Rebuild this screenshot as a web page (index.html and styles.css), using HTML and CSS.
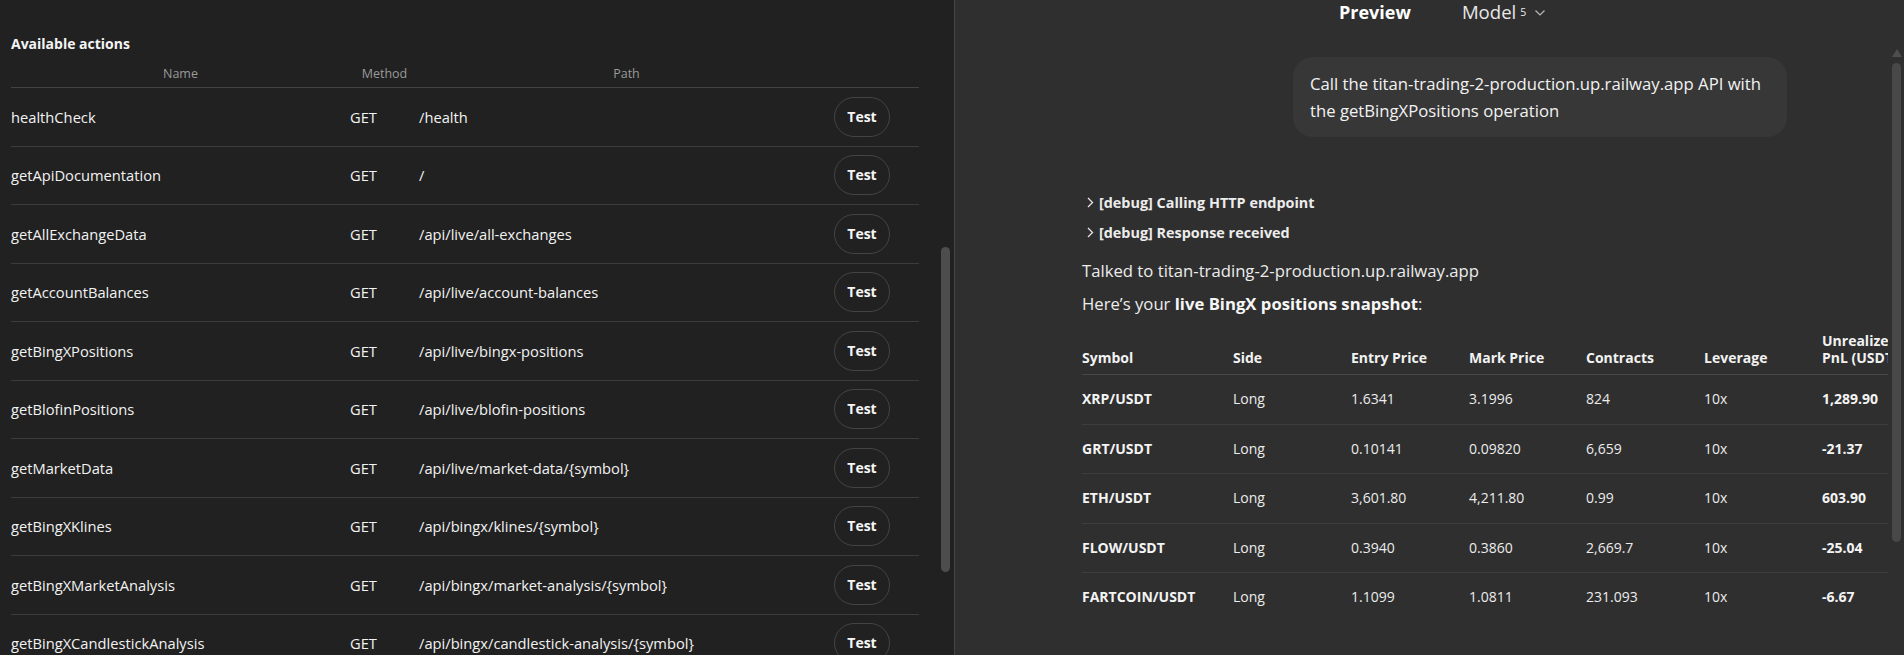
FILE: index.html
```html
<!DOCTYPE html>
<html lang="en">
<head>
<meta charset="utf-8">
<title>Actions and Preview</title>
<link rel="stylesheet" href="styles.css">
</head>
<body>
<div class="app">
  <section class="left">
    <div class="left-main">
      <h2 class="section-title">Available actions</h2>
      <table class="actions">
        <colgroup><col class="c-name"><col class="c-method"><col class="c-path"><col class="c-act"></colgroup>
        <thead>
          <tr><th>Name</th><th>Method</th><th>Path</th><th></th></tr>
        </thead>
        <tbody>
          <tr><td>healthCheck</td><td>GET</td><td>/health</td><td><button class="test-btn">Test</button></td></tr>
          <tr><td>getApiDocumentation</td><td>GET</td><td>/</td><td><button class="test-btn">Test</button></td></tr>
          <tr><td>getAllExchangeData</td><td>GET</td><td>/api/live/all-exchanges</td><td><button class="test-btn">Test</button></td></tr>
          <tr><td>getAccountBalances</td><td>GET</td><td>/api/live/account-balances</td><td><button class="test-btn">Test</button></td></tr>
          <tr><td>getBingXPositions</td><td>GET</td><td>/api/live/bingx-positions</td><td><button class="test-btn">Test</button></td></tr>
          <tr><td>getBlofinPositions</td><td>GET</td><td>/api/live/blofin-positions</td><td><button class="test-btn">Test</button></td></tr>
          <tr><td>getMarketData</td><td>GET</td><td>/api/live/market-data/{symbol}</td><td><button class="test-btn">Test</button></td></tr>
          <tr><td>getBingXKlines</td><td>GET</td><td>/api/bingx/klines/{symbol}</td><td><button class="test-btn">Test</button></td></tr>
          <tr><td>getBingXMarketAnalysis</td><td>GET</td><td>/api/bingx/market-analysis/{symbol}</td><td><button class="test-btn">Test</button></td></tr>
          <tr><td>getBingXCandlestickAnalysis</td><td>GET</td><td>/api/bingx/candlestick-analysis/{symbol}</td><td><button class="test-btn">Test</button></td></tr>
        </tbody>
      </table>
    </div>
    <div class="vscroll-left"><div class="thumb-left"></div></div>
  </section>
  <div class="divider"></div>
  <section class="right">
    <header class="tabs">
      <span class="tab-preview">Preview</span>
      <span class="tab-model">Model<span class="model-num">5</span>
        <svg class="model-chev" width="10" height="6" viewBox="0 0 10 6"><path d="M0.5 0.5 L5 5 L9.5 0.5" fill="none" stroke="#bdbdbd" stroke-width="1.1"/></svg>
      </span>
    </header>
    <div class="chat-area">
      <div class="chat-col">
        <div class="user-row">
          <div class="bubble">Call the titan-trading-2-production.up.railway.app API with the getBingXPositions operation</div>
        </div>
        <div class="debug-list">
          <div class="debug-line">
            <svg class="chev" width="7" height="11" viewBox="0 0 7 11"><path d="M1 1 L5.5 5.5 L1 10" fill="none" stroke="#e6e6e6" stroke-width="1.3"/></svg>
            <span>[debug] Calling HTTP endpoint</span>
          </div>
          <div class="debug-line">
            <svg class="chev" width="7" height="11" viewBox="0 0 7 11"><path d="M1 1 L5.5 5.5 L1 10" fill="none" stroke="#e6e6e6" stroke-width="1.3"/></svg>
            <span>[debug] Response received</span>
          </div>
        </div>
        <p class="prose">Talked to titan-trading-2-production.up.railway.app</p>
        <p class="prose">Here’s your <strong>live BingX positions snapshot</strong>:</p>
        <div class="table-wrap">
          <table class="positions">
            <colgroup><col class="p-sym"><col class="p-side"><col class="p-entry"><col class="p-mark"><col class="p-con"><col class="p-lev"><col class="p-pnl"></colgroup>
            <thead>
              <tr><th>Symbol</th><th>Side</th><th>Entry Price</th><th>Mark Price</th><th>Contracts</th><th>Leverage</th><th>Unrealized PnL (USDT)</th></tr>
            </thead>
            <tbody>
              <tr><td class="b">XRP/USDT</td><td>Long</td><td>1.6341</td><td>3.1996</td><td>824</td><td>10x</td><td class="b">1,289.90</td></tr>
              <tr><td class="b">GRT/USDT</td><td>Long</td><td>0.10141</td><td>0.09820</td><td>6,659</td><td>10x</td><td class="b">-21.37</td></tr>
              <tr><td class="b">ETH/USDT</td><td>Long</td><td>3,601.80</td><td>4,211.80</td><td>0.99</td><td>10x</td><td class="b">603.90</td></tr>
              <tr><td class="b">FLOW/USDT</td><td>Long</td><td>0.3940</td><td>0.3860</td><td>2,669.7</td><td>10x</td><td class="b">-25.04</td></tr>
              <tr><td class="b">FARTCOIN/USDT</td><td>Long</td><td>1.1099</td><td>1.0811</td><td>231.093</td><td>10x</td><td class="b">-6.67</td></tr>
            </tbody>
          </table>
        </div>
      </div>
      <div class="vscroll-right">
        <div class="arrow-up"></div>
        <div class="thumb-right"></div>
      </div>
    </div>
  </section>
</div>
</body>
</html>
```
FILE: styles.css
```css
* { box-sizing: border-box; }

html, body {
  margin: 0;
  padding: 0;
  height: 655px;
  overflow: hidden;
  background: #212121;
  font-family: "Open Sans", "Noto Sans", sans-serif;
  color: #ececec;
}

.app {
  display: flex;
  height: 655px;
  width: 1904px;
}

/* ---------- Left panel ---------- */
.left {
  width: 954px;
  flex: none;
  display: flex;
  background: #212121;
  overflow: hidden;
}

.left-main {
  width: 919px;
  padding-left: 11px;
  padding-top: 34px;
  flex: none;
}

.section-title {
  margin: 0;
  font-size: 14px;
  font-weight: 700;
  line-height: 19px;
  color: #f4f4f4;
}

.actions {
  width: 908px;
  table-layout: fixed;
  border-collapse: separate;
  border-spacing: 0;
  margin-top: 8px;
}

.c-name { width: 339px; }
.c-method { width: 69px; }
.c-path { width: 415px; }
.c-act { width: 85px; }

.actions th {
  font-size: 12.5px;
  font-weight: 400;
  color: #9a9a9a;
  text-align: center;
  line-height: 18px;
  padding: 4px 0 4px;
  border-bottom: 1px solid #424242;
}

.actions td {
  font-size: 14.7px;
  line-height: 40px;
  padding: 8.75px 0;
  border-bottom: 1px solid #3c3c3c;
  color: #f2f2f2;
  white-space: nowrap;
  text-align: left;
}

.test-btn {
  display: block;
  width: 56px;
  height: 40px;
  border-radius: 20px;
  border: 1px solid #444444;
  background: transparent;
  color: #f6f6f6;
  font-family: "Open Sans", "Noto Sans", sans-serif;
  font-size: 14px;
  font-weight: 700;
  padding: 0;
  line-height: 38px;
}

.vscroll-left {
  width: 9px;
  margin-left: 22px;
  padding-top: 247px;
  flex: none;
}

.thumb-left {
  width: 9px;
  height: 325px;
  border-radius: 5px;
  background: #4d4d4d;
}

.divider {
  width: 1px;
  flex: none;
  background: #464646;
}

/* ---------- Right panel ---------- */
.right {
  flex: 1;
  background: #2f2f2f;
  display: flex;
  flex-direction: column;
  overflow: hidden;
}

.tabs {
  height: 24px;
  display: flex;
  align-items: center;
  padding-left: 384px;
  gap: 51px;
  flex: none;
}

.tab-preview {
  font-size: 18px;
  font-weight: 700;
  color: #ffffff;
  line-height: 24px;
}

.tab-model {
  font-size: 18.6px;
  font-weight: 400;
  color: #e8e8e8;
  line-height: 24px;
  display: flex;
  align-items: center;
}

.model-num {
  font-size: 10.5px;
  margin-left: 4px;
  line-height: 24px;
}

.model-chev {
  margin-left: 9px;
  margin-top: 1px;
}

.chat-area {
  flex: 1;
  display: flex;
  padding-left: 127px;
}

.chat-col {
  width: 806px;
  flex: none;
  padding-top: 33px;
}

.user-row {
  display: flex;
  justify-content: flex-end;
  padding-right: 101px;
}

.bubble {
  max-width: 494px;
  background: #373737;
  border-radius: 20px;
  padding: 13px 18px 13px 17px;
  font-size: 16.7px;
  line-height: 27px;
  color: #f2f2f2;
}

.debug-list {
  margin-top: 50px;
}

.debug-line {
  display: flex;
  align-items: center;
  height: 30px;
  padding-left: 5px;
  font-size: 14.4px;
  font-weight: 700;
  color: #ececec;
}

.chev {
  margin-right: 5px;
  flex: none;
}

.prose {
  margin: 0;
  font-size: 16.7px;
  line-height: 33px;
  color: #ececec;
}

.debug-list + .prose {
  margin-top: 6.5px;
}

.prose strong {
  font-weight: 700;
  color: #f6f6f6;
}

.table-wrap {
  width: 806px;
  overflow: hidden;
  margin-top: 4px;
}

.positions {
  width: 830px;
  table-layout: fixed;
  border-collapse: separate;
  border-spacing: 0;
}

.p-sym { width: 151px; }
.p-side { width: 118px; }
.p-entry { width: 118px; }
.p-mark { width: 117px; }
.p-con { width: 118px; }
.p-lev { width: 118px; }
.p-pnl { width: 90px; }

.positions th {
  font-size: 14px;
  font-weight: 700;
  text-align: left;
  vertical-align: bottom;
  line-height: 17px;
  padding: 8px 0 8.5px;
  border-bottom: 1px solid #484848;
  color: #f2f2f2;
}

.positions td {
  font-size: 14px;
  line-height: 20px;
  padding: 14.25px 0;
  border-bottom: 1px solid #3d3d3d;
  color: #ececec;
  white-space: nowrap;
}

.positions tbody tr:last-child td {
  border-bottom: none;
}

.positions td.b {
  font-weight: 700;
  color: #f4f4f4;
}

.vscroll-right {
  width: 9px;
  flex: none;
  margin-left: 4px;
  padding-top: 25px;
  display: flex;
  flex-direction: column;
  align-items: center;
}

.arrow-up {
  width: 0;
  height: 0;
  border-left: 5px solid transparent;
  border-right: 5px solid transparent;
  border-bottom: 8px solid #4e4e4e;
}

.thumb-right {
  margin-top: 6px;
  width: 9px;
  height: 479px;
  border-radius: 5px;
  background: #484848;
}
```
